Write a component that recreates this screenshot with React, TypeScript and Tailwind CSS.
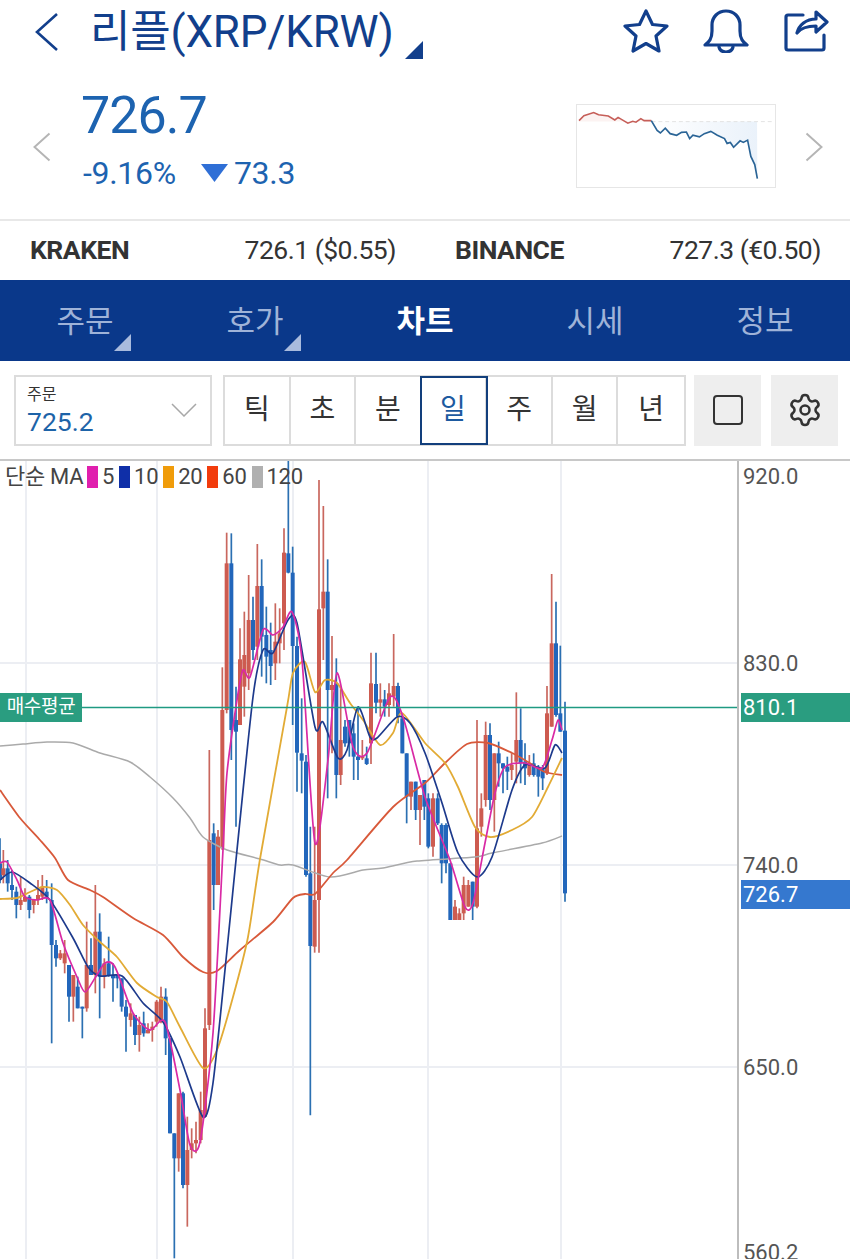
import { Settings } from "lucide-react"

type Candle = [number, number, number, number, number, number]
type Point = [number, number]

const BLUE = 0
const RED = 1

// 3x zoom coordinates, converted below: [x, wickTop, wickBottom, bodyTop, bodyBottom, colour]
const upperLeft: Candle[] = [
  [680, 218, 760, 310, 750, RED], [694, 220, 900, 310, 810, BLUE], [708, 680, 1100, 780, 815, BLUE],
  [720, 505, 790, 598, 795, RED], [733, 455, 770, 585, 680, RED], [746, 345, 690, 480, 640, RED],
  [759, 410, 600, 480, 570, BLUE], [772, 252, 600, 378, 560, RED], [785, 298, 650, 378, 530, BLUE],
  [799, 440, 670, 525, 590, BLUE], [812, 488, 675, 570, 618, BLUE], [826, 430, 660, 545, 610, RED],
  [839, 445, 610, 520, 550, RED], [852, 205, 570, 278, 490, RED], [865, 0, 340, 280, 338, BLUE],
  [878, 260, 795, 338, 558, BLUE], [891, 530, 995, 558, 878, BLUE], [905, 715, 1000, 880, 902, BLUE],
  [918, 885, 1250, 905, 1245, BLUE], [931, 1100, 1966, 1240, 1458, BLUE], [944, 1100, 1478, 1320, 1460, RED],
  [957, 60, 1478, 448, 1320, RED], [970, 138, 600, 395, 445, RED], [983, 298, 1015, 395, 690, BLUE],
  [996, 528, 880, 675, 690, RED], [1009, 595, 1015, 670, 945, BLUE], [1022, 680, 975, 840, 945, RED],
  [1035, 780, 860, 800, 850, BLUE], [1048, 780, 890, 780, 850, BLUE], [1061, 790, 960, 820, 890, BLUE],
  [1074, 740, 960, 890, 900, BLUE], [1087, 840, 900, 890, 895, RED], [1100, 860, 915, 895, 912, BLUE],
  [1113, 578, 912, 670, 850, RED], [1128, 578, 760, 672, 728, BLUE], [1141, 670, 770, 718, 728, RED],
  [1154, 690, 770, 718, 740, BLUE], [1167, 670, 770, 700, 735, RED], [1181, 522, 740, 678, 710, RED],
  [1194, 668, 790, 678, 770, BLUE], [1207, 760, 880, 775, 880, BLUE], [1220, 880, 1090, 880, 1010, BLUE],
  [1233, 965, 1050, 965, 1010, RED], [1247, 965, 1080, 965, 1050, BLUE], [1260, 1005, 1155, 1005, 1050, RED],
  [1273, 960, 1080, 960, 1040, BLUE],
]

const upperRight: Candle[] = [
  [10, 1000, 1165, 1015, 1160, BLUE], [24, 1000, 1190, 1015, 1160, RED], [38, 1000, 1095, 1015, 1090, BLUE],
  [50, 1090, 1270, 1095, 1210, BLUE], [63, 1090, 1240, 1095, 1210, BLUE], [76, 1210, 1380, 1210, 1380, BLUE],
  [90, 1320, 1380, 1340, 1380, RED], [103, 1345, 1380, 1360, 1380, RED], [116, 1250, 1380, 1275, 1360, RED],
  [130, 1260, 1340, 1275, 1340, RED], [143, 1265, 1380, 1265, 1340, BLUE], [156, 780, 1345, 1105, 1340, RED],
  [169, 1000, 1130, 1045, 1100, RED], [182, 785, 1040, 825, 1020, RED], [195, 790, 1050, 825, 1020, BLUE],
  [208, 880, 1115, 880, 1020, RED], [221, 845, 980, 880, 910, BLUE], [234, 910, 1000, 910, 925, BLUE],
  [247, 890, 990, 920, 935, BLUE], [260, 880, 960, 915, 930, RED], [274, 697, 970, 840, 905, RED],
  [287, 745, 970, 840, 910, BLUE], [300, 850, 975, 905, 925, BLUE], [313, 885, 950, 910, 945, RED],
  [326, 880, 950, 910, 945, BLUE], [340, 915, 1010, 920, 950, BLUE], [353, 915, 990, 925, 955, BLUE],
  [366, 678, 945, 760, 940, RED], [380, 342, 800, 550, 800, RED], [393, 425, 770, 550, 765, BLUE],
  [406, 557, 815, 760, 815, BLUE], [420, 725, 1325, 812, 1300, BLUE],
]

const lower: Candle[] = [
  [0, -35, 100, 40, 90, BLUE], [10, 0, 100, 55, 75, RED], [23, 30, 125, 55, 100, BLUE], [36, 60, 150, 105, 120, BLUE],
  [49, 110, 205, 125, 165, BLUE], [62, 80, 180, 150, 165, RED], [75, 115, 155, 140, 155, RED], [88, 135, 205, 140, 180, BLUE],
  [101, 150, 190, 150, 165, RED], [114, 90, 165, 135, 150, RED], [127, 75, 150, 110, 140, RED], [140, 90, 160, 125, 140, BLUE],
  [155, 100, 580, 150, 285, BLUE], [168, 270, 350, 285, 325, BLUE], [181, 300, 330, 310, 325, RED], [194, 270, 370, 310, 340, RED],
  [207, 345, 515, 345, 440, BLUE], [220, 375, 515, 375, 440, RED], [233, 380, 475, 410, 475, BLUE], [247, 470, 565, 470, 476, BLUE],
  [260, 215, 485, 345, 475, RED], [273, 265, 375, 345, 375, BLUE], [286, 105, 430, 245, 375, RED], [299, 190, 505, 245, 380, BLUE],
  [313, 325, 415, 340, 380, RED], [326, 260, 380, 340, 375, BLUE], [339, 340, 455, 375, 385, BLUE], [352, 375, 415, 375, 385, BLUE],
  [365, 385, 485, 385, 470, BLUE], [378, 450, 605, 470, 500, BLUE], [392, 460, 530, 490, 510, RED], [405, 495, 585, 495, 555, BLUE],
  [418, 500, 605, 525, 555, RED], [431, 485, 560, 520, 550, BLUE], [444, 520, 550, 540, 550, RED], [457, 515, 575, 530, 540, RED],
  [470, 450, 530, 455, 515, RED], [483, 410, 520, 440, 515, RED], [497, 415, 615, 440, 565, BLUE], [510, 565, 850, 565, 850, BLUE],
  [523, 850, 1225, 850, 925, BLUE], [536, 730, 965, 730, 925, RED], [549, 725, 1015, 730, 1005, BLUE], [562, 800, 1130, 900, 1005, RED],
  [575, 835, 925, 880, 900, RED], [588, 815, 910, 870, 880, RED], [602, 725, 880, 780, 870, RED], [615, 475, 800, 535, 800, RED],
  [628, -300, 540, -30, 525, RED], [641, -80, 180, -50, 105, BLUE], [654, -60, 105, -40, 105, RED], [667, -548, 0, -420, -5, RED],
]

const toGlobal = (list: Candle[], xo: number, yo: number): Candle[] =>
  list.map(([x, a, b, c, d, col]) => [x / 3 + xo, a / 3 + yo, b / 3 + yo, c / 3 + yo, d / 3 + yo, col])

const candles = [...toGlobal(upperLeft, 0, 460), ...toGlobal(upperRight, 425, 460), ...toGlobal(lower, 0, 850)]

const ma120: Point[] = [[0,746],[23,744],[47,742],[73,743],[100,753],[130,762],[150,777],[173,798],[190,818],[203,837],[227,850],[260,859],[280,865],[293,865],[330,877],[363,870],[383,868],[417,861],[475,857],[492,853],[542,843],[562,836]]
const ma60: Point[] = [[0,790],[20,818],[40,840],[55,858],[68,880],[90,890],[103,897],[133,918],[163,935],[183,957],[203,972],[217,971],[240,950],[273,922],[293,898],[305,894],[315,894],[333,873],[347,860],[393,807],[425,783],[445,763],[467,744],[488,743],[512,753],[528,762],[545,772],[562,775]]
const ma20: Point[] = [[0,899],[17,898],[30,892],[43,887],[57,890],[70,905],[83,925],[100,942],[117,957],[137,983],[157,997],[167,1002],[180,1027],[203,1068],[217,1050],[233,997],[248,937],[260,859],[287,707],[293,673],[305,662],[315,692],[325,680],[337,683],[350,703],[363,720],[380,745],[393,733],[402,713],[425,743],[445,763],[458,787],[475,827],[490,837],[512,830],[532,817],[548,787],[562,758]]
const ma10: Point[] = [[0,880],[12,872],[30,883],[50,900],[73,938],[88,967],[100,976],[122,976],[143,1003],[163,1022],[180,1057],[203,1117],[213,1083],[227,950],[237,850],[253,697],[263,650],[273,653],[288,620],[297,623],[315,727],[323,722],[338,758],[347,750],[358,707],[370,737],[377,738],[397,717],[410,723],[425,753],[442,803],[458,853],[477,877],[492,857],[512,790],[525,765],[545,768],[555,745],[562,753]]
const ma5: Point[] = [[0,863],[7,862],[17,880],[25,897],[37,900],[50,900],[63,943],[77,977],[85,992],[95,978],[105,963],[115,967],[133,1013],[150,1030],[165,1022],[180,1090],[190,1145],[200,1142],[213,1033],[223,850],[227,773],[237,700],[243,670],[250,677],[263,630],[273,635],[283,627],[292,612],[302,660],[315,843],[328,760],[337,673],[353,747],[367,753],[390,697],[403,717],[425,797],[450,860],[465,907],[473,903],[485,843],[495,793],[505,767],[525,763],[542,768],[552,740],[558,720],[562,730]]

// catmull-rom through the points so the averages don't look kinked
function smooth(pts: Point[]) {
  let d = `M${pts[0][0]} ${pts[0][1]}`
  for (let i = 0; i < pts.length - 1; i++) {
    const p0 = pts[Math.max(i - 1, 0)]
    const p1 = pts[i]
    const p2 = pts[i + 1]
    const p3 = pts[Math.min(i + 2, pts.length - 1)]
    const c1x = p1[0] + (p2[0] - p0[0]) / 8
    const c1y = p1[1] + (p2[1] - p0[1]) / 8
    const c2x = p2[0] - (p3[0] - p1[0]) / 8
    const c2y = p2[1] - (p3[1] - p1[1]) / 8
    d += `C${c1x} ${c1y} ${c2x} ${c2y} ${p2[0]} ${p2[1]}`
  }
  return d
}

const miniRed: Point[] = [[50,90],[65,75],[95,65],[110,72],[140,76],[160,88],[170,80],[200,98],[215,92],[225,95],[240,84],[250,90],[272,90]]
const miniBlue: Point[] = [[272,90],[290,120],[300,128],[315,113],[330,130],[350,135],[365,126],[380,125],[390,145],[400,135],[420,140],[435,130],[455,123],[475,135],[497,145],[505,160],[515,157],[525,172],[545,152],[555,157],[568,150],[578,200],[590,225],[598,268]]
const toMini = (pts: Point[]) => pts.map(([x, y]) => `${x / 3 + 560},${y / 3 + 90}`).join(" ")

function MiniChart() {
  return (
    <svg viewBox="576 104 200 84" className="w-[200px] h-[84px] border border-[#e6e6e6] bg-white">
      <defs>
        <linearGradient id="miniFill" x1="0" x2="1" y1="0" y2="0">
          <stop offset="0" stopColor="#2f7bd0" stopOpacity="0" />
          <stop offset="1" stopColor="#2f7bd0" stopOpacity="0.1" />
        </linearGradient>
      </defs>
      <polygon points={`${toMini(miniBlue)} 759,121 651,121`} fill="url(#miniFill)" />
      <polygon points={`${toMini(miniRed)} 651,121 577,121`} fill="#d9645a" fillOpacity="0.08" />
      <line x1="651" x2="776" y1="121" y2="121" stroke="#e2e2e2" strokeDasharray="4 3" />
      <polyline points={toMini(miniRed)} fill="none" stroke="#c65f59" strokeWidth="1.6" />
      <polyline points={toMini(miniBlue)} fill="none" stroke="#2a6496" strokeWidth="1.7" />
    </svg>
  )
}

function Chart() {
  return (
    <svg viewBox="0 461 737 798" className="w-[737px] h-[798px]">
      {[26, 157, 293, 428, 561].map((x) => (
        <line key={x} x1={x} x2={x} y1="461" y2="1259" stroke="#eceef3" strokeWidth="2" />
      ))}
      {[663, 865, 1067].map((y) => (
        <line key={y} x1="0" x2="737" y1={y} y2={y} stroke="#eceef3" strokeWidth="2" />
      ))}
      {candles.map(([x, wt, wb, bt, bb, col], i) => (
        <g key={i}>
          <line x1={x} x2={x} y1={wt} y2={wb} stroke={col === RED ? "#c9675e" : "#2b70b2"} strokeWidth="1.7" />
          <rect x={x - 2} y={bt} width="4" height={Math.max(bb - bt, 1)} fill={col === RED ? "#cd5b50" : "#2266bb"} />
        </g>
      ))}
      <path d={smooth(ma120)} fill="none" stroke="#aaaaaa" strokeWidth="1.5" />
      <path d={smooth(ma60)} fill="none" stroke="#d8593a" strokeWidth="1.8" />
      <path d={smooth(ma20)} fill="none" stroke="#e2ab35" strokeWidth="1.8" />
      <path d={smooth(ma10)} fill="none" stroke="#1d3a8c" strokeWidth="1.7" />
      <path d={smooth(ma5)} fill="none" stroke="#d92aa5" strokeWidth="1.7" />
      <line x1="0" x2="737" y1="707.5" y2="707.5" stroke="#1f9a82" strokeWidth="1.6" />
    </svg>
  )
}

function Corner({ className }: { className: string }) {
  return (
    <svg viewBox="0 0 18 18" className={className}>
      <polygon points="18,0 18,18 0,18" fill="currentColor" />
    </svg>
  )
}

function Chevron({ flip, className }: { flip?: boolean; className: string }) {
  return (
    <svg viewBox="0 0 24 40" className={className} fill="none" stroke="currentColor" strokeWidth="2.6">
      <polyline points={flip ? "2,2 22,20 2,38" : "22,2 2,20 22,38"} />
    </svg>
  )
}

function HeaderIcons() {
  return (
    <div className="ml-auto mr-[21px] mt-[-9px] flex items-center gap-[34px]">
      <svg viewBox="0 0 46 44" className="w-[46px] h-[44px]" fill="none" stroke="currentColor" strokeWidth="3.2" strokeLinejoin="round" strokeLinecap="round">
        <path d="M23 2L29.5 15.5L44 17L33 27L36 42L23 34.5L10 42L13 27L2 17L16.5 15.5Z" />
      </svg>
      <svg viewBox="0 0 46 44" className="w-[46px] h-[44px]" fill="none" stroke="currentColor" strokeWidth="3.2" strokeLinejoin="round" strokeLinecap="round">
        <path d="M2 36C6 33 9 30 9 22V16C9 8 15 2 23 2C31 2 37 8 37 16V22C37 30 40 33 44 36Z" />
        <path d="M16 38C17 42 20 43 23 43C26 43 29 42 30 38" />
      </svg>
      <svg viewBox="783 8 46 44" className="w-[46px] h-[44px]" fill="none" stroke="currentColor" strokeWidth="3.2" strokeLinejoin="round" strokeLinecap="round">
        <path d="M803 14H788a2 2 0 0 0-2 2V47a2 2 0 0 0 2 2H822a2 2 0 0 0 2-2V34" />
        <path d="M816 11L827 21L816 31V25C808 25 801 27 797 32C799 24 806 18 816 18Z" />
      </svg>
    </div>
  )
}

const tabs = [
  { label: "주문", corner: true },
  { label: "호가", corner: true },
  { label: "차트", active: true },
  { label: "시세" },
  { label: "정보" },
]
const periods = ["틱", "초", "분", "일", "주", "월", "년"]
const legend = [
  { color: "bg-[#e01fae]", label: "5" },
  { color: "bg-[#0f2fa8]", label: "10" },
  { color: "bg-[#f09c0a]", label: "20" },
  { color: "bg-[#f23c0c]", label: "60" },
  { color: "bg-[#b0b0b0]", label: "120" },
]

export default function App() {
  return (
    <div className="w-[850px] h-[1259px] overflow-hidden bg-white font-[Roboto,'Noto_Sans_CJK_KR',sans-serif]">
      <header className="h-[71px] flex items-center text-[#123f8c]">
        <Chevron className="w-[24px] h-[40px] ml-[35px] mt-[-7px]" />
        <h1 className="ml-[31px] mt-[-7px] text-[44px] tracking-[-0.2px] leading-none whitespace-nowrap">리플(XRP/KRW)</h1>
        <Corner className="w-[18px] h-[18px] ml-[11px] mt-[28px]" />
        <HeaderIcons />
      </header>

      <section className="h-[150px] flex items-center border-b-2 border-[#e8e8e8]">
        <Chevron className="w-[18px] h-[30px] ml-[33px] text-[#b5b5b5] mt-[4px]" />
        <div className="ml-[30px] mb-[5px] flex flex-col text-[#1d63b0]">
          <div className="text-[52px] leading-none tracking-[-1px] mt-[-6px]">726.7</div>
          <div className="flex items-center pl-[2px] mt-[15px] text-[32px] leading-none tracking-[-0.3px] whitespace-nowrap">
            <span>-9.16%</span>
            <svg viewBox="0 0 27 18" className="ml-[25px] w-[27px] h-[18px]">
              <polygon points="0,0 27,0 13.5,18" fill="#2f6fd6" />
            </svg>
            <span className="ml-[6px]">73.3</span>
          </div>
        </div>
        <div className="ml-auto mt-[2px] flex items-center">
          <MiniChart />
          <Chevron className="w-[18px] h-[30px] ml-[29px] mr-[27px] mt-[2px] text-[#b5b5b5]" flip />
        </div>
      </section>

      <section className="h-[59px] flex items-center pb-[2px] text-[26.5px] tracking-[-0.5px] text-[#333] pl-[30px] pr-[29px]">
        <div className="w-[366px] flex justify-between">
          <b className="font-bold">KRAKEN</b>
          <span>726.1 ($0.55)</span>
        </div>
        <div className="ml-[59px] flex-1 flex justify-between">
          <b className="font-bold">BINANCE</b>
          <span>727.3 (€0.50)</span>
        </div>
      </section>

      <nav className="h-[81px] grid grid-cols-5 bg-[#0a388a]">
        {tabs.map((t) => (
          <div key={t.label} className="relative flex items-center justify-center pt-[3px]">
            <span className={t.active ? "text-white font-bold text-[31px]" : "text-[#9fb3d8] text-[31px]"}>{t.label}</span>
            {t.corner && <Corner className="absolute right-[39px] bottom-[10px] w-[17px] h-[17px] text-[#a9bbdd]" />}
          </div>
        ))}
      </nav>

      <div className="h-[98px] flex items-center pl-[14px]">
        <div className="w-[198px] h-[71px] border-2 border-[#dcdcdc] flex items-center justify-between pl-[11px] pr-[13px]">
          <div className="flex flex-col pt-[3px]">
            <span className="text-[16px] leading-[20px] text-[#333]">주문</span>
            <span className="text-[26.5px] leading-[34px] text-[#1d63a8]">725.2</span>
          </div>
          <svg viewBox="0 0 26 14" className="w-[26px] h-[14px]" fill="none" stroke="#a8a8a8" strokeWidth="1.5">
            <polyline points="1,1 13,13 25,1" />
          </svg>
        </div>
        <div className="ml-[11px] w-[463px] h-[71px] grid grid-cols-7 border-2 border-[#dcdcdc] divide-x-2 divide-[#dcdcdc]">
          {periods.map((p) => (
            <div
              key={p}
              className={
                p === "일"
                  ? "-ml-[1px] flex items-center justify-center text-[28px] text-[#1d5aa0] outline-2 -outline-offset-1 outline-[#123f7c] relative"
                  : "flex items-center justify-center text-[28px] text-[#333]"
              }
            >
              {p}
            </div>
          ))}
        </div>
        <div className="ml-[8px] w-[67px] h-[71px] bg-[#eeeeee] flex items-center justify-center">
          <div className="w-[30px] h-[30px] border-[2.5px] border-[#333] rounded-[4px]" />
        </div>
        <div className="ml-[10px] w-[67px] h-[71px] bg-[#eeeeee] flex items-center justify-center">
          <Settings className="w-[36px] h-[36px] text-[#333]" strokeWidth={1.7} />
        </div>
      </div>

      <section className="relative flex border-t-2 border-[#c8c8c8] h-[800px]">
        <Chart />
        <div className="w-[113px] border-l-2 border-[#bdbdbd]" />

        <div className="absolute left-[5px] top-[5px] flex items-center text-[22px] leading-none text-[#444] tracking-[-0.3px]">
          <span className="w-[82px] whitespace-nowrap">단순 MA</span>
          {legend.map((l) => (
            <div key={l.label} className="flex items-center">
              <i className={`block w-[11px] h-[22px] ${l.color}`} />
              <span className="ml-[4px] mr-[5px]">{l.label}</span>
            </div>
          ))}
        </div>

        <div className="absolute left-0 top-[232px] w-[82px] h-[29px] bg-[#2a9d80] text-white text-[19px] tracking-[-0.3px] flex items-center justify-center">매수평균</div>
        <div className="absolute left-[741px] top-[232px] w-[109px] h-[29px] bg-[#2a9d80] text-white text-[22px] flex items-center pl-[2px]">810.1</div>
        <div className="absolute left-[741px] top-[419px] w-[109px] h-[29px] bg-[#3578cf] text-white text-[22px] flex items-center pl-[2px]">726.7</div>

        <span className="absolute left-[743px] top-[3px] text-[22px] leading-[26px] text-[#555]">920.0</span>
        <span className="absolute left-[743px] top-[190px] text-[22px] leading-[26px] text-[#555]">830.0</span>
        <span className="absolute left-[743px] top-[392px] text-[22px] leading-[26px] text-[#555]">740.0</span>
        <span className="absolute left-[743px] top-[594px] text-[22px] leading-[26px] text-[#555]">650.0</span>
        <span className="absolute left-[743px] top-[779px] text-[22px] leading-[26px] text-[#555]">560.2</span>
      </section>
    </div>
  )
}
